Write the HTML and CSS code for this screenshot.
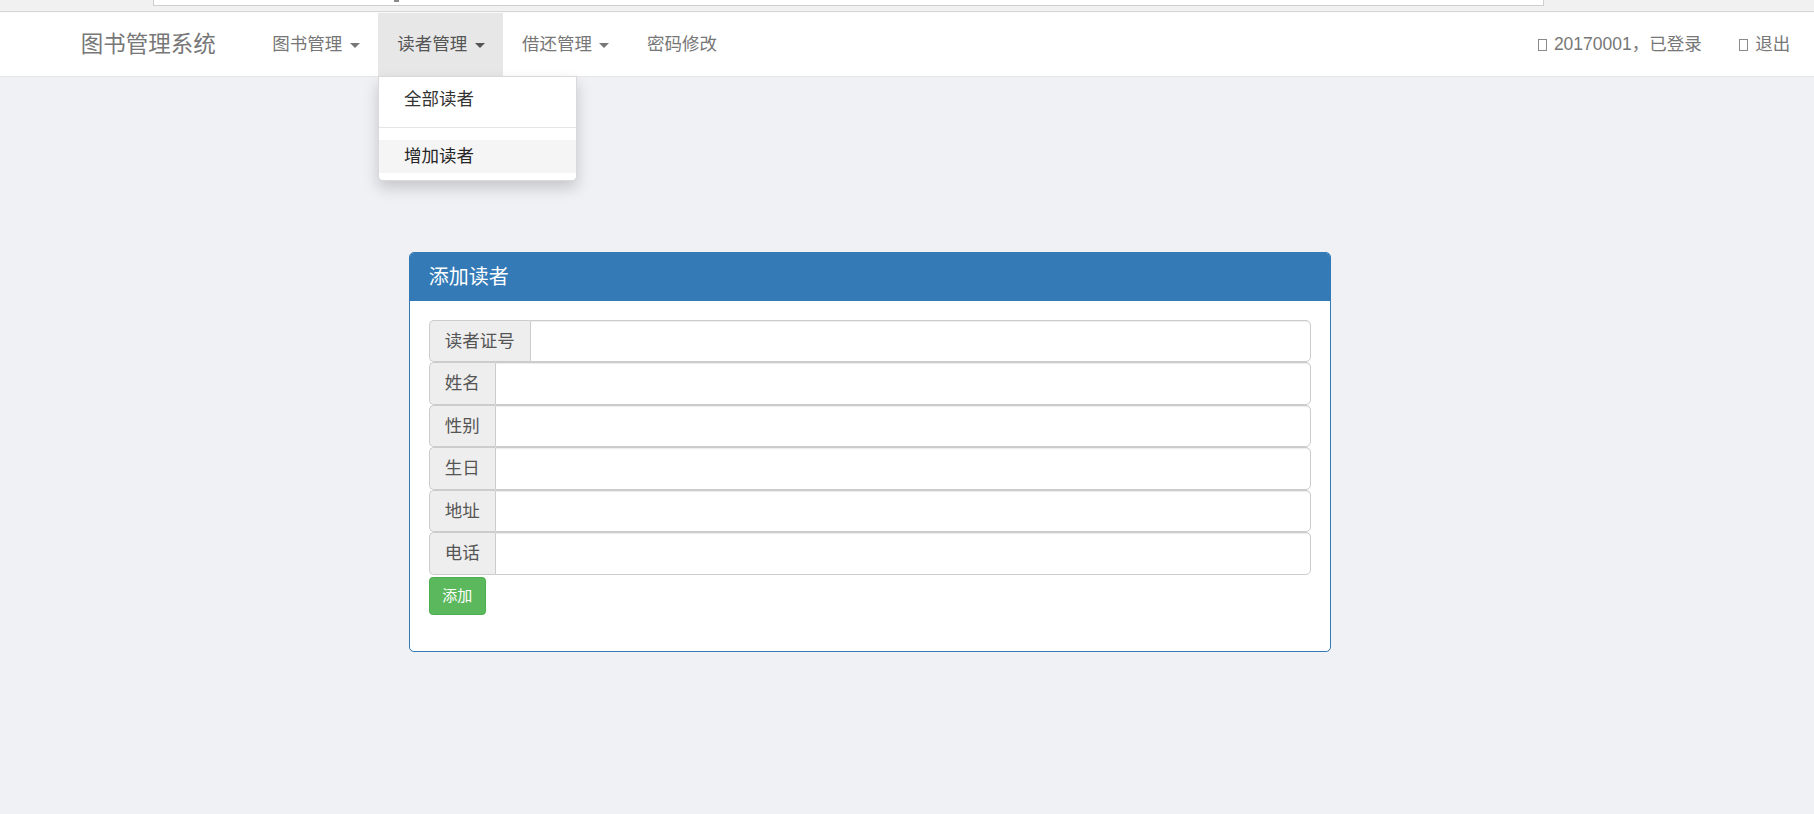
FILE: index.html
```html
<!DOCTYPE html>
<html>
  <head>
    <meta charset="utf-8">
    <title>添加读者</title>
    <link rel="stylesheet" href="styles.css">
  </head>
  <body>
  <div class="chrome">
    <div class="address"><span class="cursor"></span></div>
  </div>
  <nav class="navbar">
    <a class="brand">图书管理系统</a>
    <ul class="nav">
      <li><a>图书管理 <span class="caret"></span></a></li>
      <li class="open">
        <a>读者管理 <span class="caret"></span></a>
        <ul class="dropdown">
          <li><a>全部读者</a></li>
          <li class="divider"></li>
          <li class="hover"><a>增加读者</a></li>
        </ul>
      </li>
      <li><a>借还管理 <span class="caret"></span></a></li>
      <li><a>密码修改</a></li>
    </ul>
    <ul class="nav nav-right">
      <li><a><span class="glyph"></span>20170001，已登录</a></li>
      <li><a><span class="glyph"></span>退出</a></li>
    </ul>
  </nav>
  <main>
    <div class="panel">
      <div class="panel-heading">添加读者</div>
      <form class="panel-body">
        <div class="input-group"><span class="addon">读者证号</span><input type="text"></div>
        <div class="input-group"><span class="addon">姓名</span><input type="text"></div>
        <div class="input-group"><span class="addon">性别</span><input type="text"></div>
        <div class="input-group"><span class="addon">生日</span><input type="text"></div>
        <div class="input-group"><span class="addon">地址</span><input type="text"></div>
        <div class="input-group"><span class="addon">电话</span><input type="text"></div>
        <button type="button" class="btn-success">添加</button>
      </form>
    </div>
  </main>
  </body>
</html>
```

FILE: styles.css
```css
* {
  box-sizing: border-box;
  font-family: "Liberation Sans", "Noto Sans CJK SC", sans-serif;
}

body {
  margin: 0;
  background: #f0f1f5;
  color: #333;
  font-size: 17.5px;
}

ul {
  list-style: none;
  margin: 0;
  padding: 0;
}

.chrome {
  height: 12px;
  background: #f1f1f1;
  border-bottom: 1px solid #d6d6d6;
  padding-left: 153px;
}

.address {
  width: 1391px;
  height: 6px;
  background: #fff;
  border: 1px solid #cfcfcf;
  border-top: 0;
}

.cursor {
  display: block;
  width: 5px;
  height: 2px;
  margin-left: 240px;
  background: #888;
}

.navbar {
  display: flex;
  height: 65px;
  background: #fff;
  border-top: 1px solid #fafafa;
  border-bottom: 1px solid #e7e7e7;
}

.brand {
  margin-left: 62px;
  padding: 0 18.75px;
  font-size: 22.5px;
  line-height: 63px;
  color: #777;
}

.nav {
  display: flex;
  margin-left: 19px;
}

.nav > li {
  position: relative;
}

.nav > li > a {
  display: block;
  padding: 0 18.75px;
  line-height: 63px;
  color: #777;
  white-space: nowrap;
}

.nav > li.open > a {
  background: #e7e7e7;
  color: #555;
}

.nav-right {
  margin-left: auto;
  margin-right: 5px;
}

.caret {
  display: inline-block;
  width: 0;
  height: 0;
  margin-left: 2.5px;
  vertical-align: middle;
  border-top: 5px solid;
  border-left: 5px solid transparent;
  border-right: 5px solid transparent;
}

.glyph {
  display: inline-block;
  width: 9px;
  height: 12px;
  margin-right: 7px;
  border: 1px solid #8a8a8a;
  vertical-align: -1px;
}

.dropdown {
  position: absolute;
  top: 100%;
  left: 0;
  width: 199px;
  padding: 6.5px 0 7.5px;
  background: #fff;
  border: 1px solid rgba(0,0,0,.15);
  border-radius: 0 0 5px 5px;
  box-shadow: 0 7px 15px rgba(0,0,0,.175);
  z-index: 10;
}

.dropdown li a {
  display: block;
  padding: 3.75px 24.5px;
  line-height: 25px;
  color: #333;
}

.dropdown li.hover a {
  background: #f5f5f5;
  color: #262626;
}

.dropdown .divider {
  height: 1px;
  margin: 11px 0 12px;
  background: #e5e5e5;
}

.panel {
  width: 922px;
  margin: 175px 0 0 409px;
  background: #fff;
  border: 1px solid #337ab7;
  border-radius: 5px;
  box-shadow: 0 1px 1px rgba(0,0,0,.05);
}

.panel-heading {
  padding: 12.5px 18.75px;
  background: #337ab7;
  border-bottom: 1px solid #337ab7;
  border-radius: 4px 4px 0 0;
  color: #fff;
  font-size: 20px;
  line-height: 22px;
}

.panel-body {
  margin: 0;
  padding: 18.75px 18.75px 36px;
}

.input-group {
  display: flex;
  height: 42.5px;
}

.addon {
  padding: 0 15px;
  background: #eee;
  border: 1px solid #ccc;
  border-right: 0;
  border-radius: 5px 0 0 5px;
  color: #555;
  line-height: 40px;
  white-space: nowrap;
}

.input-group input {
  flex: 1;
  margin: 0;
  border: 1px solid #ccc;
  border-radius: 0 5px 5px 0;
  box-shadow: inset 0 1px 1px rgba(0,0,0,.075);
  font-size: 17.5px;
}

.btn-success {
  display: block;
  height: 37.5px;
  margin-top: 2.5px;
  padding: 0 12.5px;
  background: #5cb85c;
  border: 1px solid #4cae4c;
  border-radius: 3.75px;
  color: #fff;
  font-size: 15px;
  line-height: 22.5px;
}
```
